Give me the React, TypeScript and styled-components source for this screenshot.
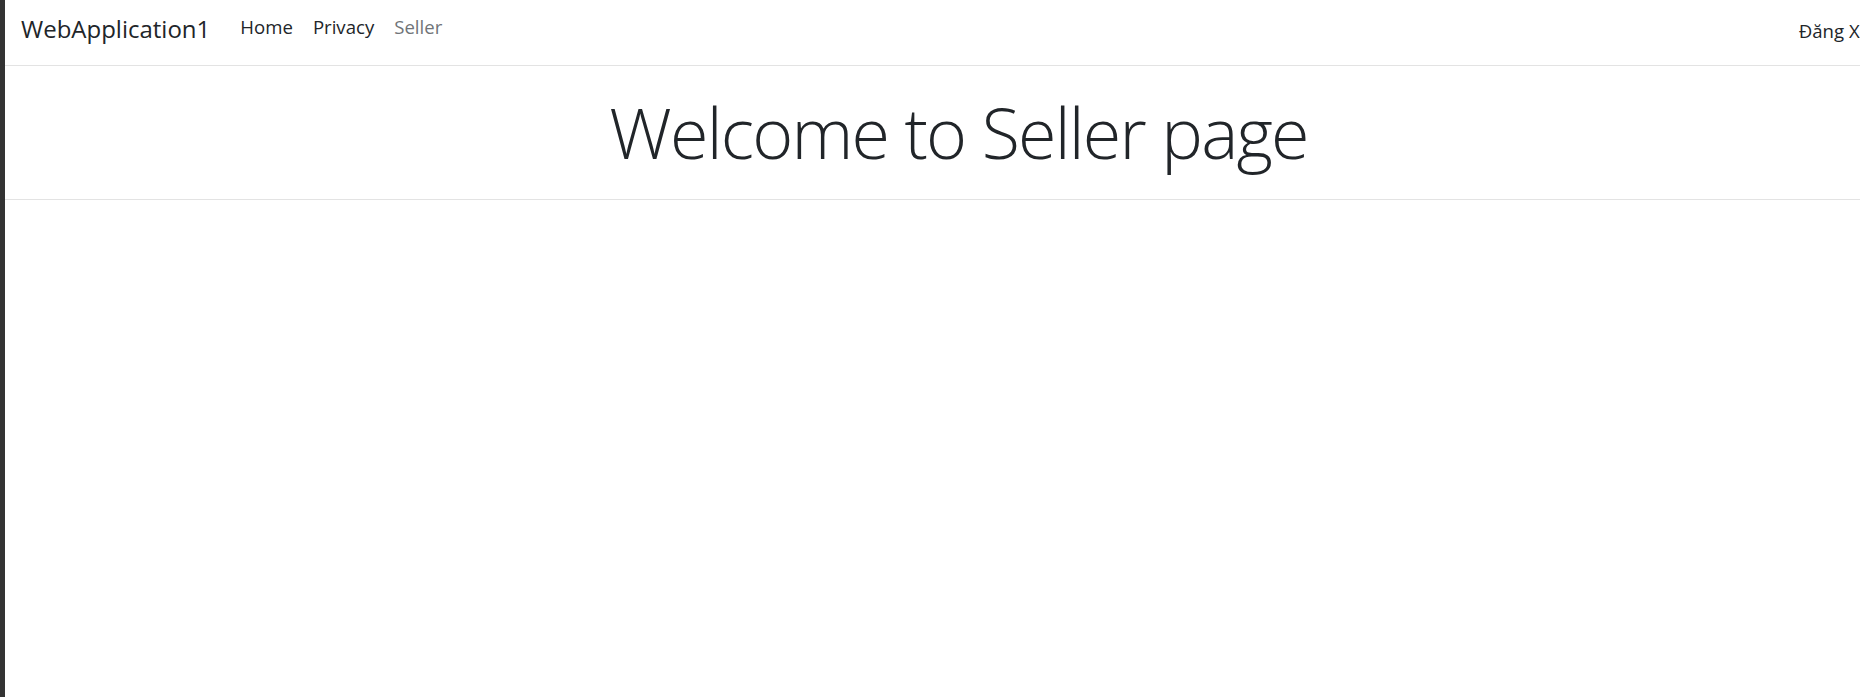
import React from "react";
import styled, { createGlobalStyle } from "styled-components";

const Global = createGlobalStyle`
  html, body { margin: 0; padding: 0; background: #ffffff; }
  body {
    overflow: hidden;
    font-family: "Open Sans", "Noto Sans", "Liberation Sans", sans-serif;
    color: #212529;
  }
`;

const Frame = styled.div`
  display: flex;
  min-height: 697px;
`;

const WindowEdge = styled.div`
  width: 5px;
  flex: 0 0 5px;
  background: #333333;
`;

const Page = styled.div`
  flex: 0 0 1907px;
  width: 1907px;
  display: flex;
  flex-direction: column;
`;

const NavBar = styled.header`
  height: 65px;
  box-sizing: content-box;
  border-bottom: 1px solid #e3e3e3;
  display: flex;
  align-items: center;
  padding: 0 16px;
`;

const Brand = styled.a`
  font-size: 24px;
  color: #212529;
  text-decoration: none;
  margin-right: 20px;
  margin-bottom: 7px;
  line-height: 1;
`;

const NavList = styled.nav`
  display: flex;
  align-items: center;
  flex: 1;
  margin-bottom: 11px;
`;

const NavLink = styled.a<{ $muted?: boolean }>`
  font-size: 18.6px;
  padding: 0 10px;
  color: ${(p) => (p.$muted ? "#707478" : "#212529")};
  text-decoration: none;
  line-height: 1;
`;

const Logout = styled.a`
  font-size: 18.6px;
  color: #212529;
  text-decoration: none;
  line-height: 1;
  white-space: nowrap;
  margin-right: 8px;
  margin-bottom: 3px;
`;

const Hero = styled.section`
  height: 133px;
  border-bottom: 1px solid #e3e3e3;
  display: flex;
  justify-content: center;
  align-items: flex-start;
`;

const Title = styled.h1`
  margin: 0;
  padding-top: 24px;
  font-size: 70px;
  font-weight: 300;
  line-height: 1.2;
  color: #212529;
  letter-spacing: -1.8px;
`;

export default function App() {
  return (
    <>
      <Global />
      <Frame>
        <WindowEdge />
        <Page>
          <NavBar>
            <Brand href="#">WebApplication1</Brand>
            <NavList>
              <NavLink href="#">Home</NavLink>
              <NavLink href="#">Privacy</NavLink>
              <NavLink href="#" $muted>
                Seller
              </NavLink>
            </NavList>
            <Logout href="#">Đăng Xuất</Logout>
          </NavBar>
          <Hero>
            <Title>Welcome to Seller page</Title>
          </Hero>
        </Page>
      </Frame>
    </>
  );
}
